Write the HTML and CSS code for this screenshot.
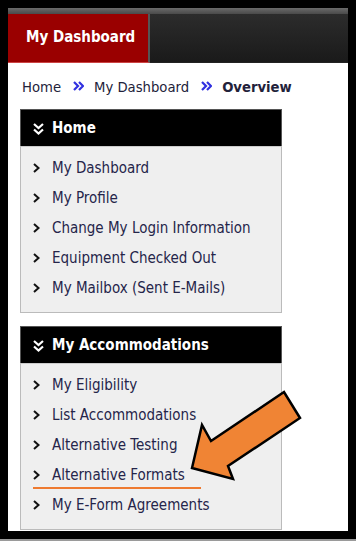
FILE: index.html
```html
<!DOCTYPE html>
<html>
<head>
<meta charset="utf-8">
<link rel="stylesheet" href="styles.css">
</head>
<body>
<div class="frame">
  <div class="topbar"></div>
  <div class="nav">
    <div class="tab">My Dashboard</div>
    <div class="navrest"></div>
  </div>
  <div class="content">
    <div class="crumbs">
      <span class="crumb">Home</span>
      <svg class="sep" width="11" height="10" viewBox="0 0 11 10"><polyline points="1,1 5,5 1,9" fill="none" stroke="#3030e0" stroke-width="2.2"/><polyline points="6,1 10,5 6,9" fill="none" stroke="#3030e0" stroke-width="2.2"/></svg>
      <span class="crumb">My Dashboard</span>
      <svg class="sep" width="11" height="10" viewBox="0 0 11 10"><polyline points="1,1 5,5 1,9" fill="none" stroke="#3030e0" stroke-width="2.2"/><polyline points="6,1 10,5 6,9" fill="none" stroke="#3030e0" stroke-width="2.2"/></svg>
      <span class="crumb current">Overview</span>
    </div>

    <div class="panel">
      <div class="panel-head">
        <svg class="dchev" width="11" height="12" viewBox="0 0 11 12"><polyline points="1,1 5.5,5 10,1" fill="none" stroke="#fff" stroke-width="2.2"/><polyline points="1,6.5 5.5,10.5 10,6.5" fill="none" stroke="#fff" stroke-width="2.2"/></svg>
        <span>Home</span>
      </div>
      <ul class="panel-list">
        <li><svg class="chev" width="7" height="10" viewBox="0 0 7 10"><polyline points="1,1 5.5,5 1,9" fill="none" stroke="#111" stroke-width="2"/></svg><span>My Dashboard</span></li>
        <li><svg class="chev" width="7" height="10" viewBox="0 0 7 10"><polyline points="1,1 5.5,5 1,9" fill="none" stroke="#111" stroke-width="2"/></svg><span>My Profile</span></li>
        <li><svg class="chev" width="7" height="10" viewBox="0 0 7 10"><polyline points="1,1 5.5,5 1,9" fill="none" stroke="#111" stroke-width="2"/></svg><span>Change My Login Information</span></li>
        <li><svg class="chev" width="7" height="10" viewBox="0 0 7 10"><polyline points="1,1 5.5,5 1,9" fill="none" stroke="#111" stroke-width="2"/></svg><span>Equipment Checked Out</span></li>
        <li><svg class="chev" width="7" height="10" viewBox="0 0 7 10"><polyline points="1,1 5.5,5 1,9" fill="none" stroke="#111" stroke-width="2"/></svg><span>My Mailbox (Sent E-Mails)</span></li>
      </ul>
    </div>

    <div class="panel">
      <div class="panel-head">
        <svg class="dchev" width="11" height="12" viewBox="0 0 11 12"><polyline points="1,1 5.5,5 10,1" fill="none" stroke="#fff" stroke-width="2.2"/><polyline points="1,6.5 5.5,10.5 10,6.5" fill="none" stroke="#fff" stroke-width="2.2"/></svg>
        <span>My Accommodations</span>
      </div>
      <ul class="panel-list">
        <li><svg class="chev" width="7" height="10" viewBox="0 0 7 10"><polyline points="1,1 5.5,5 1,9" fill="none" stroke="#111" stroke-width="2"/></svg><span>My Eligibility</span></li>
        <li><svg class="chev" width="7" height="10" viewBox="0 0 7 10"><polyline points="1,1 5.5,5 1,9" fill="none" stroke="#111" stroke-width="2"/></svg><span>List Accommodations</span></li>
        <li><svg class="chev" width="7" height="10" viewBox="0 0 7 10"><polyline points="1,1 5.5,5 1,9" fill="none" stroke="#111" stroke-width="2"/></svg><span>Alternative Testing</span></li>
        <li class="marked"><svg class="chev" width="7" height="10" viewBox="0 0 7 10"><polyline points="1,1 5.5,5 1,9" fill="none" stroke="#111" stroke-width="2"/></svg><span>Alternative Formats</span></li>
        <li><svg class="chev" width="7" height="10" viewBox="0 0 7 10"><polyline points="1,1 5.5,5 1,9" fill="none" stroke="#111" stroke-width="2"/></svg><span>My E-Form Agreements</span></li>
      </ul>
    </div>
  </div>
  <svg class="arrow" width="356" height="541" viewBox="0 0 356 541">
    <polygon points="192,468 233,479 228,466 300,418 284,392 211,441 202,425" fill="#f08434" stroke="#000" stroke-width="2.5" stroke-linejoin="miter"/>
  </svg>
</div>
<div class="bottomline"></div>
</body>
</html>
```
FILE: styles.css
```css
html { background: #000; }
body {
  margin: 0;
  padding: 8px 8px 0;
  width: 340px;
  height: 541px;
  box-sizing: content-box;
  background: #000;
  font-family: "DejaVu Sans Condensed", "DejaVu Sans", sans-serif;
  overflow: hidden;
}
.frame {
  height: 523px;
  background: #fff;
}
.topbar {
  height: 6px;
  background: linear-gradient(#6a6a6a, #4a4a4a);
}
.nav {
  display: flex;
  height: 48px;
  background: linear-gradient(#2c2c2c, #1a1a1a);
  border-bottom: 1px solid #222;
}
.tab {
  width: 142px;
  padding-left: 18px;
  padding-bottom: 2px;
  box-sizing: border-box;
  background: #9a0000;
  border-right: 2px solid #555;
  border-bottom: 1px solid #c44;
  margin-bottom: -1px;
  color: #fff;
  font-weight: bold;
  font-size: 15px;
  display: flex;
  align-items: center;
}
.navrest { flex: 1; }
.content {
  padding: 0 0 0 12px;
}
.crumbs {
  display: flex;
  align-items: center;
  height: 46px;
  padding-left: 2px;
  font-size: 14.7px;
  color: #22223a;
}
.crumb.current { font-weight: bold; }
.sep { margin: 0 10px 0 12px; }
.panel {
  width: 262px;
}
.panel + .panel { margin-top: 13px; }
.panel-head {
  height: 37px;
  background: #000;
  border: 1px solid #555;
  border-bottom: none;
  box-sizing: border-box;
  display: flex;
  align-items: center;
  color: #fff;
  font-weight: bold;
  font-size: 15px;
  padding-left: 12px;
}
.dchev { margin-right: 8px; margin-top: 1px; }
.panel-list {
  list-style: none;
  margin: 0;
  padding: 6px 0 9px;
  background: #efefef;
  border: 1px solid #bbb;
  border-top: 1px solid #ccc;
}
.panel-list li {
  height: 30px;
  display: flex;
  align-items: center;
  padding-left: 12px;
  font-size: 15px;
  color: #25254a;
  position: relative;
}
.chev { margin-right: 12px; }
.marked::after {
  content: "";
  position: absolute;
  left: 12px;
  width: 168px;
  top: 27px;
  height: 2px;
  background: #ee7a30;
}
.arrow {
  position: absolute;
  left: 0;
  top: 0;
  pointer-events: none;
}
.bottomline {
  margin-top: 8px;
  height: 2px;
  background: #9a9a9a;
  margin-left: -8px;
  margin-right: -8px;
}
```
